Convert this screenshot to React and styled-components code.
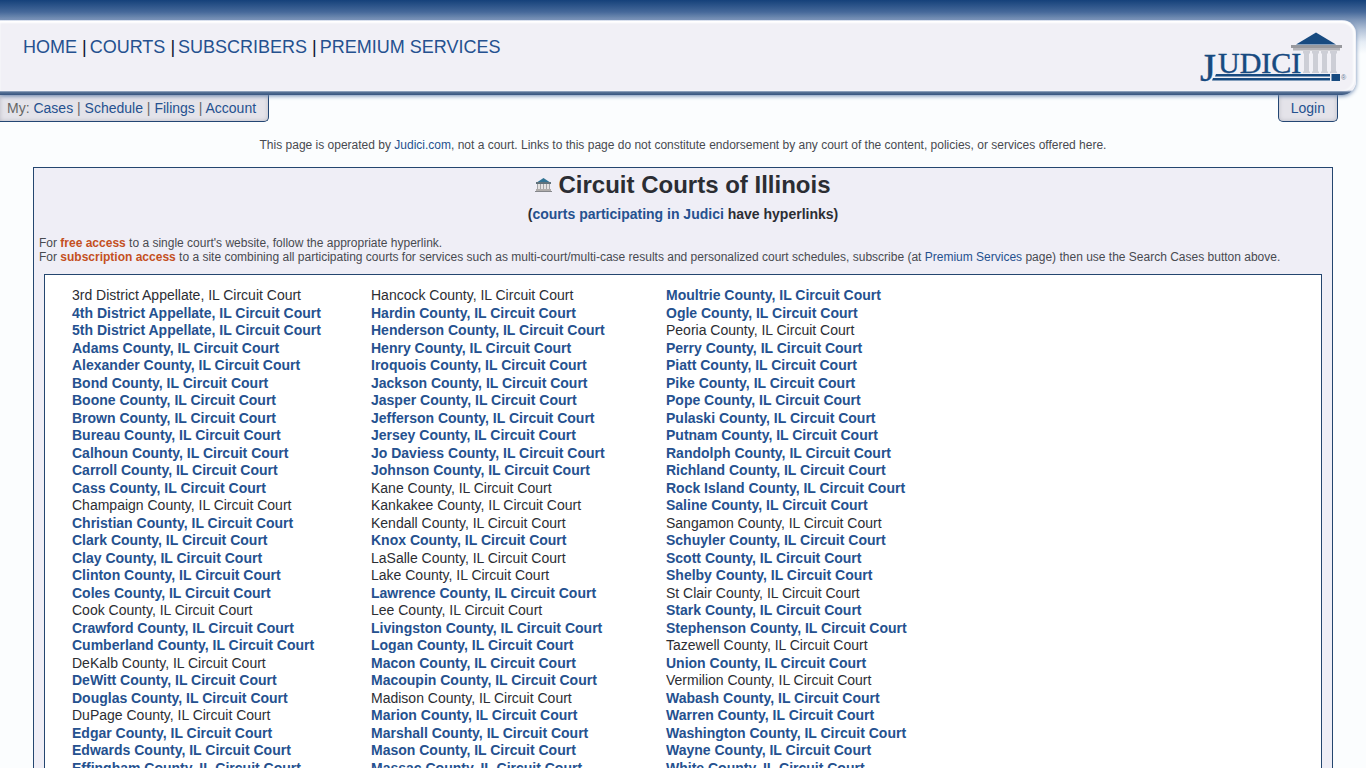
import React from "react";
import styled, { createGlobalStyle } from "styled-components";

const GlobalStyle = createGlobalStyle`
  *, *::before, *::after { box-sizing: border-box; }
  body {
    margin: 0;
    color: #2b2d33;
    font: 14px/1.25 "Liberation Sans", Arial, sans-serif;
    background: #fbfdfe linear-gradient(#15417a 0, #46699a 12px, #7e96b9 20px, #b4c3d8 30px, #e6edf5 42px, #fbfdfe 54px) 0 0 / 100% 54px no-repeat;
  }
  a { color: #25518f; text-decoration: none; }
  a:hover { text-decoration: underline; }
`;

const Page = styled.div`
  padding-top: 20px;
`;

const Header = styled.header`
  position: relative;
  z-index: 1;
  display: flex;
  justify-content: space-between;
  height: 75px;
  margin-right: 10px;
  padding: 16px 8px 0 23px;
  background: linear-gradient(#cdd6e8 0, #fbfbfd 2px, #f1f0f6 5px, #f1f0f6 70px, #b9c5da 71px, #5b7598 72px, #36547f 75px);
  border-radius: 0 14px 14px 0;
  box-shadow: 0 1px 4px #6f8bb3;

  &::before {
    content: "";
    position: absolute;
    inset: 1px 1px 4px 0;
    background: #f1f0f6;
    border-radius: 0 13px 12px 0;
    box-shadow: inset 0 2px 2px #fff, inset -2px 0 2px #fafbfd;
  }
`;

const MainNav = styled.nav`
  position: relative;
  display: flex;
  align-items: center;
  height: 22px;
  font-size: 18px;
  line-height: 22px;
`;

const NavLink = styled.a`
  & + & {
    margin-left: 5px;
  }
  & + &::before {
    content: "|";
    margin-right: 3px;
    color: #0b1430;
  }
`;

const LogoLink = styled.a`
  position: relative;
  display: block;
  width: 150px;
  height: 52px;
  margin-top: -4px;
`;

const LogoArt = styled.svg`
  display: block;
  overflow: visible;
`;

const TabBar = styled.div`
  display: flex;
  justify-content: space-between;
  padding-right: 28px;
`;

const Tab = styled.nav`
  height: 27px;
  padding: ${({ $side }) => ($side === "left" ? "0 12px 0 7px" : "0 12px")};
  line-height: 26px;
  color: #666;
  background: #e4e3e9;
  border: solid #234673;
  border-width: ${({ $side }) => ($side === "left" ? "0 1px 1px 0" : "0 1px 1px")};
  border-radius: ${({ $side }) => ($side === "left" ? "0 0 5px 0" : "0 0 5px 5px")};
  box-shadow: inset 0 0 4px #b9bac4;
`;

const Disclaimer = styled.p`
  margin: 16px 0 15px;
  text-align: center;
  font-size: 12px;
  line-height: 14px;
  color: #484a50;
`;

const Panel = styled.main`
  margin: 0 33px;
  padding: 0 10px 10px;
  background: #efeef6;
  border: 1px solid #24466f;
`;

const Title = styled.h1`
  display: flex;
  align-items: center;
  justify-content: center;
  gap: 6px;
  margin: 2px 0 0;
  font-size: 24px;
  line-height: 30px;
`;

const Subtitle = styled.h2`
  margin: 5px 0 0;
  text-align: center;
  font-size: 14px;
  line-height: 18px;
`;

const Intro = styled.p`
  margin: 13px -5px 10px;
  font-size: 12px;
  line-height: 14px;
  color: #484a50;

  strong { color: #c4501f; }
`;

const Directory = styled.div`
  display: grid;
  grid-template-columns: 299px 295px 1fr;
  padding: 12px 27px;
  background: #fff;
  border: 1px solid #24466f;
`;

const CourtList = styled.ul`
  margin: 0;
  padding: 0;
  list-style: none;
  white-space: nowrap;
`;

const CourtLink = styled.a`
  font-weight: bold;
`;

const columns = [
  ["-3rd District Appellate", "4th District Appellate", "5th District Appellate", "Adams County", "Alexander County", "Bond County", "Boone County", "Brown County", "Bureau County", "Calhoun County", "Carroll County", "Cass County", "-Champaign County", "Christian County", "Clark County", "Clay County", "Clinton County", "Coles County", "-Cook County", "Crawford County", "Cumberland County", "-DeKalb County", "DeWitt County", "Douglas County", "-DuPage County", "Edgar County", "Edwards County", "Effingham County"],
  ["-Hancock County", "Hardin County", "Henderson County", "Henry County", "Iroquois County", "Jackson County", "Jasper County", "Jefferson County", "Jersey County", "Jo Daviess County", "Johnson County", "-Kane County", "-Kankakee County", "-Kendall County", "Knox County", "-LaSalle County", "-Lake County", "Lawrence County", "-Lee County", "Livingston County", "Logan County", "Macon County", "Macoupin County", "-Madison County", "Marion County", "Marshall County", "Mason County", "Massac County"],
  ["Moultrie County", "Ogle County", "-Peoria County", "Perry County", "Piatt County", "Pike County", "Pope County", "Pulaski County", "Putnam County", "Randolph County", "Richland County", "Rock Island County", "Saline County", "-Sangamon County", "Schuyler County", "Scott County", "Shelby County", "-St Clair County", "Stark County", "Stephenson County", "-Tazewell County", "Union County", "-Vermilion County", "Wabash County", "Warren County", "Washington County", "Wayne County", "White County"],
];

// A leading "-" marks a court that has no site of its own.
function Court({ entry }) {
  const linked = !entry.startsWith("-");
  const name = `${entry.replace("-", "")}, IL Circuit Court`;
  return <li>{linked ? <CourtLink href="#">{name}</CourtLink> : name}</li>;
}

function Logo() {
  return (
    <LogoArt width="150" height="52" viewBox="0 0 150 52" role="img" aria-label="Judici">
      <path d="M98 12.500 118 .5 138 12.500Z" fill="#174a80" />
      <path d="M93 13H144V16H93Z" fill="#98999e" />
      <path d="M95 16H142V18.500H95Z" fill="#b3b3b8" />
      <g fill="#cdced6">
        {[105, 114, 123, 132].map((x) => (
          <path key={x} d={`M${x} 19h7v2l-1 1v17l1 1v1h-7v-1l1-1V22l-1-1Z`} />
        ))}
      </g>
      <g fill="#174a80" stroke="#174a80" strokeWidth=".4" fontFamily="'Liberation Serif', serif">
        <text x="2" y="49" fontSize="41">J</text>
        <text x="20" y="41" fontSize="30">UDICI</text>
      </g>
      <path d="M18 42H132V44.500H17Z M15 46H132V48.500H14Z M133.500 42H142V49H133.500Z" fill="#174a80" />
      <text x="143" y="48" fontSize="7" fill="#667995" fontFamily="'Liberation Sans', sans-serif">®</text>
    </LogoArt>
  );
}

function CourthouseIcon() {
  return (
    <svg width="17" height="14" viewBox="0 0 17 14" aria-hidden="true">
      <path d="M1 5 8.500 0 16 5Z" fill="#327394" />
      <path d="M1 4H16V6H1Z" fill="#60727b" />
      <path d="M2 6H15V12H2Z" fill="#a3a4a8" />
      <path d="M3 6h2v6H3ZM6 6h2v6H6ZM9 6h2v6H9ZM12 6h2v6h-2Z" fill="#e5e3e2" />
      <path d="M1 11H16V13H1Z" fill="#b0adab" />
      <path d="M0 13H17V14H0Z" fill="#85878b" />
    </svg>
  );
}

export default function App() {
  return (
    <Page>
      <GlobalStyle />
      <Header>
        <MainNav aria-label="Main">
          {["HOME", "COURTS", "SUBSCRIBERS", "PREMIUM SERVICES"].map((label) => (
            <NavLink key={label} href="#">{label}</NavLink>
          ))}
        </MainNav>
        <LogoLink href="#"><Logo /></LogoLink>
      </Header>
      <TabBar>
        <Tab $side="left" aria-label="My Judici">
          My: <a href="#">Cases</a> | <a href="#">Schedule</a> | <a href="#">Filings</a> | <a href="#">Account</a>
        </Tab>
        <Tab $side="right" aria-label="Session"><a href="#">Login</a></Tab>
      </TabBar>
      <Disclaimer>
        This page is operated by <a href="#">Judici.com</a>, not a court. Links to this page do not constitute endorsement by any court of the content, policies, or services offered here.
      </Disclaimer>
      <Panel>
        <Title><CourthouseIcon />Circuit Courts of Illinois</Title>
        <Subtitle>(<a href="#">courts participating in Judici</a> have hyperlinks)</Subtitle>
        <Intro>
          For <strong>free access</strong> to a single court's website, follow the appropriate hyperlink.<br />
          For <strong>subscription access</strong> to a site combining all participating courts for services such as multi-court/multi-case results and personalized court schedules, subscribe (at <a href="#">Premium Services</a> page) then use the Search Cases button above.
        </Intro>
        <Directory>
          {columns.map((courts) => (
            <CourtList key={courts[0]}>
              {courts.map((entry) => <Court key={entry} entry={entry} />)}
            </CourtList>
          ))}
        </Directory>
      </Panel>
    </Page>
  );
}
